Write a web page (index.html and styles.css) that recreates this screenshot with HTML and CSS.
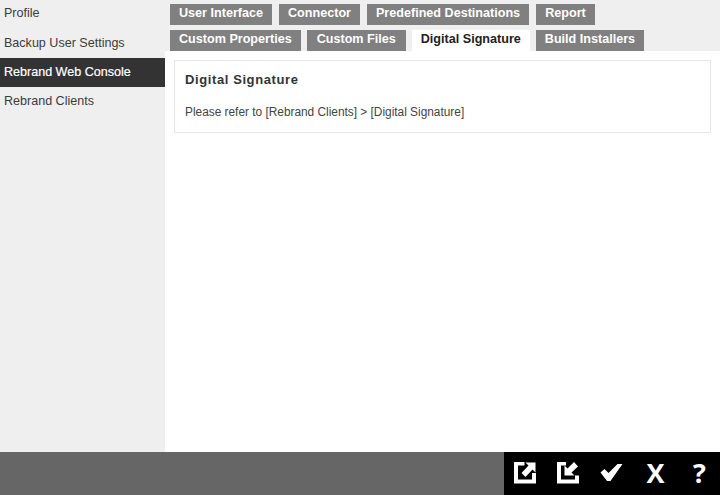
FILE: index.html
```html
<!DOCTYPE html>
<html lang="en">
<head>
<meta charset="utf-8">
<title>Rebrand Web Console</title>
<link rel="stylesheet" href="styles.css">
</head>
<body>
<div class="app">
  <div class="main">
    <nav class="side">
      <a class="side-item first">Profile</a>
      <a class="side-item">Backup User Settings</a>
      <a class="side-item active">Rebrand Web Console</a>
      <a class="side-item">Rebrand Clients</a>
    </nav>
    <div class="right">
      <div class="tabs">
        <div class="tab-row upper">
          <a class="tab">User Interface</a>
          <a class="tab">Connector</a>
          <a class="tab">Predefined Destinations</a>
          <a class="tab">Report</a>
        </div>
        <div class="tab-row">
          <a class="tab">Custom Properties</a>
          <a class="tab roomy">Custom Files</a>
          <a class="tab current">Digital Signature</a>
          <a class="tab">Build Installers</a>
        </div>
      </div>
      <div class="content">
        <section class="card">
          <h2 class="card-title">Digital Signature</h2>
          <p class="card-text">Please refer to [Rebrand Clients] &gt; [Digital Signature]</p>
        </section>
      </div>
    </div>
  </div>
  <footer class="foot">
    <div class="actions">
      <svg class="icon" viewBox="0 0 23 23"><path d="M0 0h10.500v3.500H4V17.500h14V11h4v10.500H0z" fill="#fff"/><path d="M11.500 .5H21.500V10.500L18.500 7.500 11.500 15 7.500 11 14.500 3.500z" fill="#fff"/></svg>
      <svg class="icon" viewBox="0 0 23 23"><path d="M0 0h9v3.500H4V17.500h14v-4h4v8H0z" fill="#fff"/><path d="M7.500 3.500L10.500 6.500 17 0 21 4.500 14.500 10.500 17.500 13.500H7.500z" fill="#fff"/></svg>
      <svg class="icon" viewBox="0 0 23 23"><path d="M.5 10.500L4.500 7 8.500 11 17.500 2H22.500L10.500 19H7z" fill="#fff"/></svg>
      <span class="glyph wide">X</span>
      <span class="glyph">?</span>
    </div>
  </footer>
</div>
</body>
</html>
```
FILE: styles.css
```css
html, body { margin: 0; padding: 0; height: 100%; }
body { font-family: "Liberation Sans", Arial, sans-serif; background: #fff; }
.app { display: flex; flex-direction: column; height: 495px; width: 720px; overflow: hidden; }
.main { flex: 1; display: flex; min-height: 0; }
.side { width: 165px; background: #efefef; display: flex; flex-direction: column; flex-shrink: 0; }
.side-item { height: 29px; line-height: 28px; padding-left: 4px; font-size: 12.550px; color: #3c3c3c; }
.side-item.first { line-height: 26px; }
.side-item.active { background: #333; color: #fff; -webkit-text-stroke: 0.2px #fff; line-height: 28px; }
.right { flex: 1; display: flex; flex-direction: column; min-width: 0; }
.tabs { background: #efefef; padding: 4px 0 0 5px; height: 51px; box-sizing: border-box; display: flex; flex-direction: column; gap: 5px; }
.tab-row { display: flex; gap: 6px; height: 21px; }
.tab-row.upper { gap: 7px; }
.tab { background: #808080; color: #fff; font-size: 12.600px; font-weight: bold; padding: 0 9px; line-height: 19px; }
.tab.roomy { padding: 0 10px; }
.tab.current { background: #fff; color: #222; }
.content { flex: 1; padding: 9px 9px 0 9px; background: #fff; }
.card { border: 1px solid #e6e6e6; height: 73px; box-sizing: border-box; padding: 11px 10px; }
.card-title { margin: 0; font-size: 13px; font-weight: bold; color: #333; letter-spacing: 0.6px; line-height: 16px; }
.card-text { margin: 17px 0 0; font-size: 11.870px; color: #444; line-height: 14px; }
.foot { height: 43px; background: #666; display: flex; justify-content: flex-end; flex-shrink: 0; }
.actions { width: 216px; background: #000; display: flex; align-items: center; padding-left: 10px; box-sizing: border-box; gap: 20px; }
.icon { width: 23px; height: 23px; display: block; }
.glyph { color: #fff; font: bold 27px "Open Sans", sans-serif; width: 23px; text-align: center; line-height: 30px; padding-bottom: 2px; }
.glyph.wide { width: 25px; }
```
